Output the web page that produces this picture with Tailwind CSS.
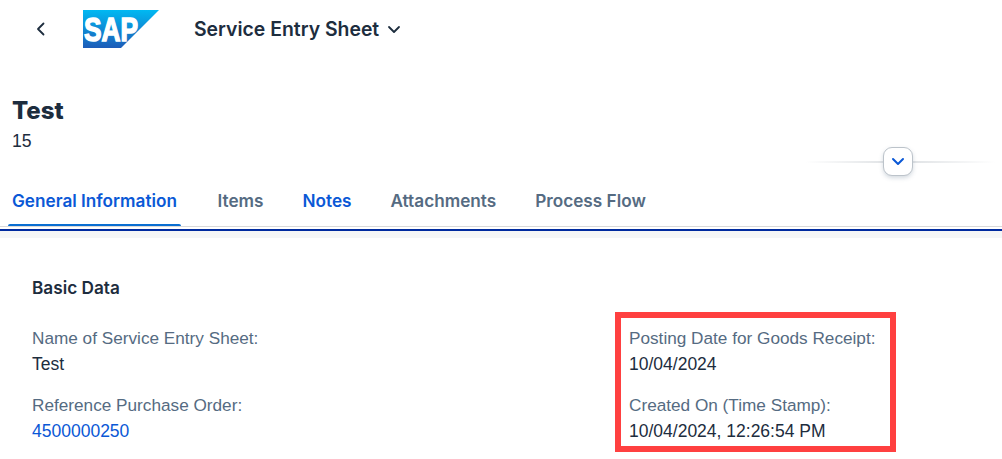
<!DOCTYPE html>
<html lang="en">
<head>
<meta charset="UTF-8">
<title>Service Entry Sheet</title>
<script src="https://cdn.jsdelivr.net/npm/@tailwindcss/browser@4"></script>
</head>
<body class="relative h-[459px] w-[1002px] overflow-hidden bg-white font-['Liberation_Sans',sans-serif] text-[#1d2d3e]">
  <!-- shell bar -->
  <header class="flex h-[58px] items-center">
    <button class="ml-[34px] flex w-[12px] justify-center">
      <svg class="h-[16px] w-[10px]" viewBox="0 0 10 16" fill="none" stroke="#1d2d3e" stroke-width="1.8" stroke-linecap="round" stroke-linejoin="round"><path d="M8.500 2.500 3 8l5.500 5.500"/></svg>
    </button>
    <svg class="ml-[37px] h-[38px] w-[76px]" viewBox="0 0 76 38">
      <defs><linearGradient id="sapblue" x1="0" y1="0" x2="0" y2="1"><stop offset="0" stop-color="#00b9f2"/><stop offset="1" stop-color="#1d5cb8"/></linearGradient></defs>
      <polygon points="0,0 76,0 38,38 0,38" fill="url(#sapblue)"/>
      <text x="1" y="31" font-family="Liberation Sans" font-weight="700" font-size="33" fill="#fff" stroke="#fff" stroke-width="1.500" textLength="54" lengthAdjust="spacingAndGlyphs">SAP</text>
    </svg>
    <h2 class="ml-[35px] mt-[2px] font-['Inter'] text-[19.400px] font-semibold">Service Entry Sheet</h2>
    <svg class="ml-[8px] mt-[2px] h-[12px] w-[14px]" viewBox="0 0 14 12" fill="none" stroke="#1d2d3e" stroke-width="1.800" stroke-linecap="round" stroke-linejoin="round"><path d="m2 3 5 5 5-5"/></svg>
  </header>

  <!-- object header -->
  <section class="relative h-[127px] px-[12px] pt-[37px]">
    <h1 class="font-['Inter'] text-[24px] leading-[32px] font-extrabold">Test</h1>
    <p class="mt-[2px] text-[17.600px] leading-[24px]">15</p>
    <div class="absolute left-[805px] top-[103px] h-[2px] w-[190px] bg-gradient-to-r from-transparent via-[#dcdfe2] to-transparent"></div>
    <button class="absolute left-[883px] top-[89px] flex h-[29px] w-[30px] items-center justify-center rounded-[9px] border border-[#bcc3ca] bg-white shadow-[0_2px_4px_rgba(85,107,130,0.25)]">
      <svg class="h-[10px] w-[14px]" viewBox="0 0 14 10" fill="none" stroke="#0a58d6" stroke-width="2" stroke-linecap="round" stroke-linejoin="round"><path d="m2 2 5 5 5-5"/></svg>
    </button>
  </section>

  <!-- tabs -->
  <nav class="flex h-[42px] items-start gap-[39px] border-b border-[#d9d9d9] pl-[12px] pt-[4px] font-['Inter'] text-[17.200px] font-semibold text-[#556b82]">
    <a class="relative leading-[24px] text-[#0a58d6]">General Information<span class="absolute -bottom-[13px] -left-[4px] -right-[4px] h-[2px] rounded-t bg-[#0a6ed1]"></span></a>
    <a class="ml-[1.500px] leading-[24px]">Items</a>
    <a class="leading-[24px] text-[#0a58d6]">Notes</a>
    <a class="leading-[24px]">Attachments</a>
    <a class="leading-[24px]">Process Flow</a>
  </nav>
  <div class="mt-[2px] h-[2px] bg-[#002a9f]"></div>
  <div class="h-[7px] bg-[#f5f6f7]"></div>

  <!-- basic data -->
  <main class="px-[32px] pt-[38px]">
    <h3 class="font-['Inter'] text-[17.200px] leading-[24px] font-semibold">Basic Data</h3>
    <div class="mt-[25px] grid grid-cols-[597px_1fr] gap-y-[15px] text-[17.500px] leading-[26px]">
      <div>
        <p class="text-[17.200px] text-[#556b82]">Name of Service Entry Sheet:</p>
        <p>Test</p>
      </div>
      <div>
        <p class="text-[17.200px] text-[#556b82]">Posting Date for Goods Receipt:</p>
        <p>10/04/2024</p>
      </div>
      <div>
        <p class="text-[17.200px] text-[#556b82]">Reference Purchase Order:</p>
        <a class="text-[#0a58d6]">4500000250</a>
      </div>
      <div>
        <p class="text-[17.200px] text-[#556b82]">Created On (Time Stamp):</p>
        <p>10/04/2024, 12:26:54 PM</p>
      </div>
    </div>
  </main>

  <!-- annotation -->
  <div class="absolute left-[615px] top-[312px] h-[140px] w-[281px] border-[6px] border-[#ff4040]"></div>
</body>
</html>
